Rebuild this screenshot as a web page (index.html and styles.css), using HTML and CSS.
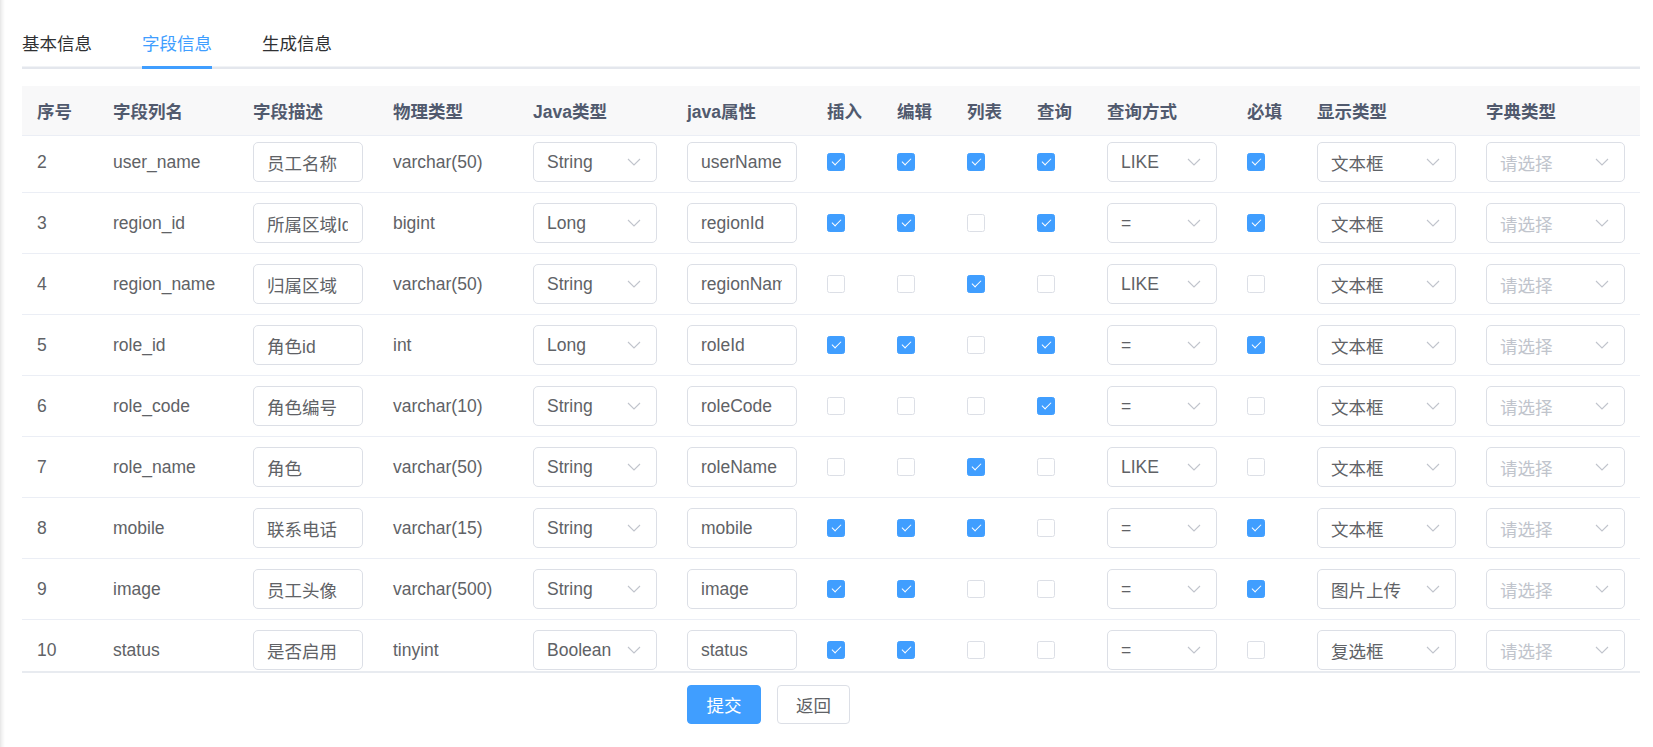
FILE: index.html
```html
<!DOCTYPE html>
<html lang="zh-CN">
<head>
<meta charset="utf-8">
<title>字段信息</title>
<link rel="stylesheet" href="styles.css">
</head>
<body>
<div class="page">
  <div class="tabs">
    <div class="tab">基本信息</div>
    <div class="tab active">字段信息</div>
    <div class="tab">生成信息</div>
  </div>

  <div class="table">
    <div class="thead">
      <div class="th">序号</div>
      <div class="th">字段列名</div>
      <div class="th">字段描述</div>
      <div class="th">物理类型</div>
      <div class="th">Java类型</div>
      <div class="th">java属性</div>
      <div class="th">插入</div>
      <div class="th">编辑</div>
      <div class="th">列表</div>
      <div class="th">查询</div>
      <div class="th">查询方式</div>
      <div class="th">必填</div>
      <div class="th">显示类型</div>
      <div class="th">字典类型</div>
    </div>
    <div class="tbody">
      <div class="rows">

        <div class="tr">
          <div class="td">2</div>
          <div class="td">user_name</div>
          <div class="td"><div class="inp"><span>员工名称</span></div></div>
          <div class="td">varchar(50)</div>
          <div class="td"><div class="sel"><span>String</span><svg class="arrow" viewBox="0 0 14 8"><polyline points="1,1 7,7 13,1"/></svg></div></div>
          <div class="td"><div class="inp"><span>userName</span></div></div>
          <div class="td"><span class="cb on"></span></div>
          <div class="td"><span class="cb on"></span></div>
          <div class="td"><span class="cb on"></span></div>
          <div class="td"><span class="cb on"></span></div>
          <div class="td"><div class="sel"><span>LIKE</span><svg class="arrow" viewBox="0 0 14 8"><polyline points="1,1 7,7 13,1"/></svg></div></div>
          <div class="td"><span class="cb on"></span></div>
          <div class="td"><div class="sel"><span>文本框</span><svg class="arrow" viewBox="0 0 14 8"><polyline points="1,1 7,7 13,1"/></svg></div></div>
          <div class="td"><div class="sel ph"><span>请选择</span><svg class="arrow" viewBox="0 0 14 8"><polyline points="1,1 7,7 13,1"/></svg></div></div>
        </div>

        <div class="tr">
          <div class="td">3</div>
          <div class="td">region_id</div>
          <div class="td"><div class="inp"><span>所属区域Id</span></div></div>
          <div class="td">bigint</div>
          <div class="td"><div class="sel"><span>Long</span><svg class="arrow" viewBox="0 0 14 8"><polyline points="1,1 7,7 13,1"/></svg></div></div>
          <div class="td"><div class="inp"><span>regionId</span></div></div>
          <div class="td"><span class="cb on"></span></div>
          <div class="td"><span class="cb on"></span></div>
          <div class="td"><span class="cb"></span></div>
          <div class="td"><span class="cb on"></span></div>
          <div class="td"><div class="sel"><span>=</span><svg class="arrow" viewBox="0 0 14 8"><polyline points="1,1 7,7 13,1"/></svg></div></div>
          <div class="td"><span class="cb on"></span></div>
          <div class="td"><div class="sel"><span>文本框</span><svg class="arrow" viewBox="0 0 14 8"><polyline points="1,1 7,7 13,1"/></svg></div></div>
          <div class="td"><div class="sel ph"><span>请选择</span><svg class="arrow" viewBox="0 0 14 8"><polyline points="1,1 7,7 13,1"/></svg></div></div>
        </div>

        <div class="tr">
          <div class="td">4</div>
          <div class="td">region_name</div>
          <div class="td"><div class="inp"><span>归属区域</span></div></div>
          <div class="td">varchar(50)</div>
          <div class="td"><div class="sel"><span>String</span><svg class="arrow" viewBox="0 0 14 8"><polyline points="1,1 7,7 13,1"/></svg></div></div>
          <div class="td"><div class="inp"><span>regionName</span></div></div>
          <div class="td"><span class="cb"></span></div>
          <div class="td"><span class="cb"></span></div>
          <div class="td"><span class="cb on"></span></div>
          <div class="td"><span class="cb"></span></div>
          <div class="td"><div class="sel"><span>LIKE</span><svg class="arrow" viewBox="0 0 14 8"><polyline points="1,1 7,7 13,1"/></svg></div></div>
          <div class="td"><span class="cb"></span></div>
          <div class="td"><div class="sel"><span>文本框</span><svg class="arrow" viewBox="0 0 14 8"><polyline points="1,1 7,7 13,1"/></svg></div></div>
          <div class="td"><div class="sel ph"><span>请选择</span><svg class="arrow" viewBox="0 0 14 8"><polyline points="1,1 7,7 13,1"/></svg></div></div>
        </div>

        <div class="tr">
          <div class="td">5</div>
          <div class="td">role_id</div>
          <div class="td"><div class="inp"><span>角色id</span></div></div>
          <div class="td">int</div>
          <div class="td"><div class="sel"><span>Long</span><svg class="arrow" viewBox="0 0 14 8"><polyline points="1,1 7,7 13,1"/></svg></div></div>
          <div class="td"><div class="inp"><span>roleId</span></div></div>
          <div class="td"><span class="cb on"></span></div>
          <div class="td"><span class="cb on"></span></div>
          <div class="td"><span class="cb"></span></div>
          <div class="td"><span class="cb on"></span></div>
          <div class="td"><div class="sel"><span>=</span><svg class="arrow" viewBox="0 0 14 8"><polyline points="1,1 7,7 13,1"/></svg></div></div>
          <div class="td"><span class="cb on"></span></div>
          <div class="td"><div class="sel"><span>文本框</span><svg class="arrow" viewBox="0 0 14 8"><polyline points="1,1 7,7 13,1"/></svg></div></div>
          <div class="td"><div class="sel ph"><span>请选择</span><svg class="arrow" viewBox="0 0 14 8"><polyline points="1,1 7,7 13,1"/></svg></div></div>
        </div>

        <div class="tr">
          <div class="td">6</div>
          <div class="td">role_code</div>
          <div class="td"><div class="inp"><span>角色编号</span></div></div>
          <div class="td">varchar(10)</div>
          <div class="td"><div class="sel"><span>String</span><svg class="arrow" viewBox="0 0 14 8"><polyline points="1,1 7,7 13,1"/></svg></div></div>
          <div class="td"><div class="inp"><span>roleCode</span></div></div>
          <div class="td"><span class="cb"></span></div>
          <div class="td"><span class="cb"></span></div>
          <div class="td"><span class="cb"></span></div>
          <div class="td"><span class="cb on"></span></div>
          <div class="td"><div class="sel"><span>=</span><svg class="arrow" viewBox="0 0 14 8"><polyline points="1,1 7,7 13,1"/></svg></div></div>
          <div class="td"><span class="cb"></span></div>
          <div class="td"><div class="sel"><span>文本框</span><svg class="arrow" viewBox="0 0 14 8"><polyline points="1,1 7,7 13,1"/></svg></div></div>
          <div class="td"><div class="sel ph"><span>请选择</span><svg class="arrow" viewBox="0 0 14 8"><polyline points="1,1 7,7 13,1"/></svg></div></div>
        </div>

        <div class="tr">
          <div class="td">7</div>
          <div class="td">role_name</div>
          <div class="td"><div class="inp"><span>角色</span></div></div>
          <div class="td">varchar(50)</div>
          <div class="td"><div class="sel"><span>String</span><svg class="arrow" viewBox="0 0 14 8"><polyline points="1,1 7,7 13,1"/></svg></div></div>
          <div class="td"><div class="inp"><span>roleName</span></div></div>
          <div class="td"><span class="cb"></span></div>
          <div class="td"><span class="cb"></span></div>
          <div class="td"><span class="cb on"></span></div>
          <div class="td"><span class="cb"></span></div>
          <div class="td"><div class="sel"><span>LIKE</span><svg class="arrow" viewBox="0 0 14 8"><polyline points="1,1 7,7 13,1"/></svg></div></div>
          <div class="td"><span class="cb"></span></div>
          <div class="td"><div class="sel"><span>文本框</span><svg class="arrow" viewBox="0 0 14 8"><polyline points="1,1 7,7 13,1"/></svg></div></div>
          <div class="td"><div class="sel ph"><span>请选择</span><svg class="arrow" viewBox="0 0 14 8"><polyline points="1,1 7,7 13,1"/></svg></div></div>
        </div>

        <div class="tr">
          <div class="td">8</div>
          <div class="td">mobile</div>
          <div class="td"><div class="inp"><span>联系电话</span></div></div>
          <div class="td">varchar(15)</div>
          <div class="td"><div class="sel"><span>String</span><svg class="arrow" viewBox="0 0 14 8"><polyline points="1,1 7,7 13,1"/></svg></div></div>
          <div class="td"><div class="inp"><span>mobile</span></div></div>
          <div class="td"><span class="cb on"></span></div>
          <div class="td"><span class="cb on"></span></div>
          <div class="td"><span class="cb on"></span></div>
          <div class="td"><span class="cb"></span></div>
          <div class="td"><div class="sel"><span>=</span><svg class="arrow" viewBox="0 0 14 8"><polyline points="1,1 7,7 13,1"/></svg></div></div>
          <div class="td"><span class="cb on"></span></div>
          <div class="td"><div class="sel"><span>文本框</span><svg class="arrow" viewBox="0 0 14 8"><polyline points="1,1 7,7 13,1"/></svg></div></div>
          <div class="td"><div class="sel ph"><span>请选择</span><svg class="arrow" viewBox="0 0 14 8"><polyline points="1,1 7,7 13,1"/></svg></div></div>
        </div>

        <div class="tr">
          <div class="td">9</div>
          <div class="td">image</div>
          <div class="td"><div class="inp"><span>员工头像</span></div></div>
          <div class="td">varchar(500)</div>
          <div class="td"><div class="sel"><span>String</span><svg class="arrow" viewBox="0 0 14 8"><polyline points="1,1 7,7 13,1"/></svg></div></div>
          <div class="td"><div class="inp"><span>image</span></div></div>
          <div class="td"><span class="cb on"></span></div>
          <div class="td"><span class="cb on"></span></div>
          <div class="td"><span class="cb"></span></div>
          <div class="td"><span class="cb"></span></div>
          <div class="td"><div class="sel"><span>=</span><svg class="arrow" viewBox="0 0 14 8"><polyline points="1,1 7,7 13,1"/></svg></div></div>
          <div class="td"><span class="cb on"></span></div>
          <div class="td"><div class="sel"><span>图片上传</span><svg class="arrow" viewBox="0 0 14 8"><polyline points="1,1 7,7 13,1"/></svg></div></div>
          <div class="td"><div class="sel ph"><span>请选择</span><svg class="arrow" viewBox="0 0 14 8"><polyline points="1,1 7,7 13,1"/></svg></div></div>
        </div>

        <div class="tr">
          <div class="td">10</div>
          <div class="td">status</div>
          <div class="td"><div class="inp"><span>是否启用</span></div></div>
          <div class="td">tinyint</div>
          <div class="td"><div class="sel"><span>Boolean</span><svg class="arrow" viewBox="0 0 14 8"><polyline points="1,1 7,7 13,1"/></svg></div></div>
          <div class="td"><div class="inp"><span>status</span></div></div>
          <div class="td"><span class="cb on"></span></div>
          <div class="td"><span class="cb on"></span></div>
          <div class="td"><span class="cb"></span></div>
          <div class="td"><span class="cb"></span></div>
          <div class="td"><div class="sel"><span>=</span><svg class="arrow" viewBox="0 0 14 8"><polyline points="1,1 7,7 13,1"/></svg></div></div>
          <div class="td"><span class="cb"></span></div>
          <div class="td"><div class="sel"><span>复选框</span><svg class="arrow" viewBox="0 0 14 8"><polyline points="1,1 7,7 13,1"/></svg></div></div>
          <div class="td"><div class="sel ph"><span>请选择</span><svg class="arrow" viewBox="0 0 14 8"><polyline points="1,1 7,7 13,1"/></svg></div></div>
        </div>

      </div>
    </div>
  </div>

  <div class="footer">
    <button class="btn primary">提交</button>
    <button class="btn">返回</button>
  </div>
</div>
</body>
</html>
```

FILE: styles.css
```css
* {
  box-sizing: border-box;
}

html, body {
  margin: 0;
  padding: 0;
}

body {
  font-family: "Liberation Sans", "Noto Sans CJK SC", sans-serif;
  font-size: 17.5px;
  color: #606266;
  background: linear-gradient(to right, #e6e6e6 0, #f3f3f3 2px, #ffffff 5px);
  height: 747px;
  overflow: hidden;
}

.page {
  padding: 19px 13px 0 22px;
}

/* Tabs */
.tabs {
  display: flex;
  height: 50px;
  box-shadow: inset 0 -2.5px 0 #e4e7ed;
}

.tab {
  height: 50px;
  line-height: 50px;
  margin: 0 25px;
  color: #303133;
  font-size: 17.5px;
  white-space: nowrap;
}

.tab:first-child {
  margin-left: 0;
}

.tab.active {
  color: #409eff;
  box-shadow: inset 0 -3px 0 #409eff;
}

/* Table */
.table {
  margin-top: 17px;
}

.thead,
.tr {
  display: grid;
  grid-template-columns: 76px 140px 140px 140px 154px 140px 70px 70px 70px 70px 140px 70px 169px 169px;
}

.thead {
  height: 50px;
  background: #f8f8f9;
  border-bottom: 1px solid #ebeef5;
}

.th {
  display: flex;
  align-items: center;
  padding: 0 15px;
  font-weight: 700;
  color: #515a6e;
  white-space: nowrap;
}

.tbody {
  height: 535px;
  overflow: hidden;
  border-bottom: 2px solid #e8ebf0;
  box-sizing: content-box;
}

.rows {
  margin-top: -4px;
}

.tr {
  height: 61px;
  border-bottom: 1px solid #ebeef5;
}

.td {
  display: flex;
  align-items: center;
  padding: 0 15px;
  white-space: nowrap;
  overflow: hidden;
  min-width: 0;
}

/* Input */
.inp {
  width: 100%;
  height: 40px;
  border: 1px solid #dcdfe6;
  border-radius: 5px;
  padding: 0 14px 0 13px;
  display: flex;
  align-items: center;
  background: #fff;
  color: #606266;
}

.inp span {
  display: block;
  overflow: hidden;
  white-space: nowrap;
  width: 100%;
}

/* Select */
.sel {
  width: 100%;
  height: 40px;
  border: 1px solid #dcdfe6;
  border-radius: 5px;
  padding: 0 15px 0 13px;
  display: flex;
  align-items: center;
  justify-content: space-between;
  background: #fff;
  color: #606266;
}

.sel span {
  overflow: hidden;
  white-space: nowrap;
}

.sel.ph span {
  color: #c0c4cc;
}

.arrow {
  width: 14px;
  height: 8px;
  flex: none;
  fill: none;
  stroke: #c0c4cc;
  stroke-width: 1.1;
}

/* Checkbox */
.cb {
  display: inline-block;
  position: relative;
  width: 17.5px;
  height: 17.5px;
  border: 1px solid #dcdfe6;
  border-radius: 2.5px;
  background: #fff;
}

.cb.on {
  background: #409eff;
  border-color: #409eff;
}

.cb.on::after {
  content: "";
  position: absolute;
  left: 5.5px;
  top: 2px;
  width: 4px;
  height: 8px;
  border-right: 1.2px solid #fff;
  border-bottom: 1.2px solid #fff;
  transform: rotate(45deg);
}

/* Footer buttons */
.footer {
  display: flex;
  justify-content: center;
  gap: 16px;
  margin-top: 12px;
  margin-left: -125px;
}

.btn {
  height: 39px;
  width: 73px;
  border: 1px solid #dcdfe6;
  border-radius: 4px;
  background: #fff;
  color: #606266;
  font-family: "Liberation Sans", "Noto Sans CJK SC", sans-serif;
  font-size: 17.5px;
  padding: 0;
  cursor: pointer;
}

.btn.primary {
  width: 74px;
  background: #409eff;
  border-color: #409eff;
  color: #fff;
}
```
